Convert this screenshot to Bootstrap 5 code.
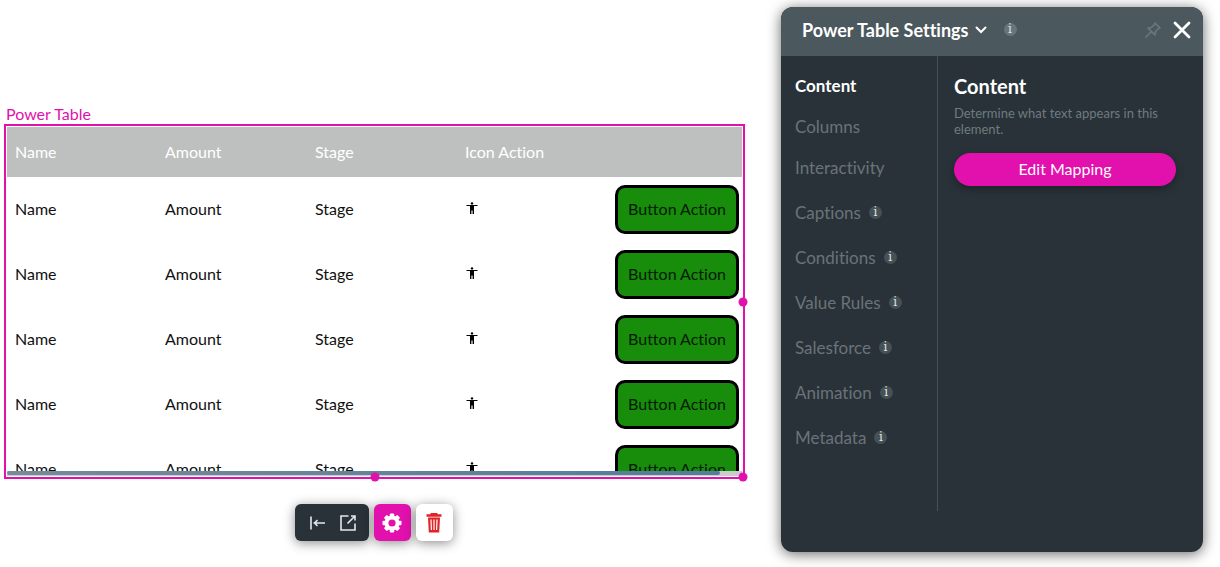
<!DOCTYPE html>
<html lang="en">
<head>
<meta charset="utf-8">
<meta name="viewport" content="width=device-width, initial-scale=1">
<title>Power Table Settings</title>
<link href="https://cdn.jsdelivr.net/npm/bootstrap@5.3.0/dist/css/bootstrap.min.css" rel="stylesheet">
<style>
  :root { --pink: #e210ad; --dark: #283238; --slate: #4b585e; }
  body { font-family: Lato, sans-serif; font-size: 16px; line-height: 20px; color: #000; background: #fff; font-variant-ligatures: none; }
  button { font-family: inherit; font-variant-ligatures: none; }
  .workspace { gap: 36px; padding: 7px 17px 15px 4px; }
  .stage { padding-top: 97px; min-width: 0; }
  .stage-label { color: var(--pink); padding-left: 2px; }
  .selection { border: 2px solid var(--pink); padding: 1px; }
  .viewport { height: 344px; overflow: hidden; }
  .power-table { table-layout: fixed; width: 100%; min-width: 735px; border-collapse: collapse; }
  .power-table th { background: #bec0bf; color: #fff; font-weight: 400; height: 50px; padding: 0 8px; }
  .power-table td { height: 65px; padding: 0 8px 2px; color: #111; }
  .power-table .fixed-col { width: 150px; }
  .power-table td:last-child { padding: 0 3px 0 8px; }
  .cell-btn { width: 100%; height: 49px; border: 3px solid #000; border-radius: 10px; background: #178d0b; color: #041a02; padding: 0 0 2px; white-space: nowrap; display: block; }
  .icon-btn { border: 0; background: none; padding: 0; display: block; line-height: 0; }
  .power-table .icon-btn { padding: 0 0 2px 1px; }
  .track { height: 5px; background: #ccc; }
  .thumb { height: 4px; width: 97%; background: linear-gradient(90deg, #758b99, #537d9b); border-radius: 3px; }
  .grip { width: 9px; height: 9px; border-radius: 50%; background: var(--pink); }
  .tools { gap: 5px; margin-top: 25px; padding-right: 2px; }
  .tool { height: 37px; min-width: 37px; border: 0; border-radius: 6px; box-shadow: 0 2px 12px rgba(0,0,0,.45); }
  .tool-dark { background: var(--dark); gap: 14px; padding: 0 13px 0 14px; }
  .tool-pink { background: var(--pink); padding: 0; }
  .tool-white { background: #fff; padding: 0; }
  .settings { width: 422px; background: var(--dark); border-radius: 12px; box-shadow: 0 2px 14px rgba(0,0,0,.6); overflow: hidden; padding-bottom: 41px; }
  .settings-head { height: 49px; background: var(--slate); padding: 0 12px 4px 21px; }
  .title-btn { border: 0; background: none; color: #fff; font-size: 18px; font-weight: 700; padding: 0; gap: 6px; }
  .info { width: 13px; height: 13px; border-radius: 50%; background: #465156; color: #e1e4e5; border: 0; padding: 0; font: 12px/13px "DejaVu Serif", serif; text-align: center; flex: none; }
  .info-head { background: #69757a; margin-left: 17px; }
  .side { width: 157px; height: 455px; border-right: 1px solid #465055; padding: 1px 0 0 14px; }
  .side a { height: 45px; color: #6b7378; font-size: 17px; line-height: 24px; text-decoration: none; display: flex; align-items: flex-end; }
  .side li { display: flex; align-items: flex-end; gap: 8px; }
  .side li .info { margin-bottom: 6px; }
  .side .plain a { height: 41px; }
  .side a.current { color: #fff; font-weight: 700; }
  .pane { padding: 17px 27px 0 16px; }
  .pane h2 { font-size: 20px; line-height: 26px; font-weight: 700; color: #fff; margin: 0 0 6px; }
  .pane p { font-size: 13px; line-height: 16px; color: #6f7b81; margin: 0 0 16px; }
  .map-btn { height: 33px; border: 0; border-radius: 17px; background: var(--pink); color: #fff; padding: 0 0 2px; box-shadow: 0 3px 8px rgba(0,0,0,.3); }
</style>
</head>
<body>
<svg class="d-none">
  <symbol id="person" viewBox="0 0 12 12"><circle cx="6" cy="1.4" r="1.2"/><path d="M.5 3h11v1H8v8H6.600V8.500H5.400V12H4V4H.5z"/></symbol>
</svg>
<div class="workspace d-flex align-items-start">
  <main class="stage flex-grow-1">
    <div class="stage-label">Power Table</div>
    <div class="selection position-relative">
      <div class="viewport">
        <table class="power-table">
          <thead><tr><th class="fixed-col">Name</th><th class="fixed-col">Amount</th><th class="fixed-col">Stage</th><th class="fixed-col">Icon Action</th><th aria-label="Button"></th></tr></thead>
          <tbody>
            <tr><td>Name</td><td>Amount</td><td>Stage</td><td><button class="icon-btn" aria-label="Icon action"><svg width="12" height="12"><use href="#person"/></svg></button></td><td><button class="cell-btn">Button Action</button></td></tr>
            <tr><td>Name</td><td>Amount</td><td>Stage</td><td><button class="icon-btn" aria-label="Icon action"><svg width="12" height="12"><use href="#person"/></svg></button></td><td><button class="cell-btn">Button Action</button></td></tr>
            <tr><td>Name</td><td>Amount</td><td>Stage</td><td><button class="icon-btn" aria-label="Icon action"><svg width="12" height="12"><use href="#person"/></svg></button></td><td><button class="cell-btn">Button Action</button></td></tr>
            <tr><td>Name</td><td>Amount</td><td>Stage</td><td><button class="icon-btn" aria-label="Icon action"><svg width="12" height="12"><use href="#person"/></svg></button></td><td><button class="cell-btn">Button Action</button></td></tr>
            <tr><td>Name</td><td>Amount</td><td>Stage</td><td><button class="icon-btn" aria-label="Icon action"><svg width="12" height="12"><use href="#person"/></svg></button></td><td><button class="cell-btn">Button Action</button></td></tr>
          </tbody>
        </table>
      </div>
      <div class="track"><div class="thumb"></div></div>
      <span class="grip position-absolute top-50 start-100 translate-middle"></span>
      <span class="grip position-absolute top-100 start-50 translate-middle"></span>
      <span class="grip position-absolute top-100 start-100 translate-middle"></span>
    </div>
    <div class="tools d-flex justify-content-center">
      <div class="tool tool-dark d-flex align-items-center">
        <button class="icon-btn" aria-label="Align left"><svg width="17" height="16" fill="none" stroke="#e6e8e9" stroke-width="1.600"><path d="M2 1.500v13M4.500 8H16M8.500 5 5.500 8l3 3"/></svg></button>
        <button class="icon-btn" aria-label="Open"><svg width="16" height="16" fill="none" stroke="#e6e8e9" stroke-width="1.600"><path d="M8.500 1H1v14h14V8.500M11 1h4v4.500M15 1 7.500 8.500"/></svg></button>
      </div>
      <button class="tool tool-pink d-flex align-items-center justify-content-center" aria-label="Settings">
        <svg width="20" height="20" viewBox="-10 -10 20 20"><g fill="#fff"><circle r="7.500"/><g id="teeth"><rect x="-2.200" y="-9.500" width="4.400" height="19" rx="1"/><rect x="-9.500" y="-2.200" width="19" height="4.400" rx="1"/></g><use href="#teeth" transform="rotate(45)"/></g><circle r="3.600" fill="#e210ad"/></svg>
      </button>
      <button class="tool tool-white d-flex align-items-center justify-content-center" aria-label="Delete">
        <svg width="16" height="20" fill="#df2428"><path d="M5 0h6l1 1.300h3.500v2.500H.5V1.300H4zM2 4.500h12l-.8 15H2.800z"/><path d="M5 6.500l.4 10.500M8 6.500V17M11 6.500L10.600 17" stroke="#fff" stroke-width="1.200"/></svg>
      </button>
    </div>
  </main>

  <aside class="settings flex-shrink-0">
    <header class="settings-head d-flex align-items-center">
      <button class="title-btn d-flex align-items-center">Power Table Settings
        <svg width="12" height="8" fill="none" stroke="#fff" stroke-width="2" stroke-linecap="round"><path d="M1.500 1.500 6 6l4.500-4.500"/></svg>
      </button>
      <button class="info info-head" aria-label="About these settings">i</button>
      <button class="icon-btn ms-auto me-2 pe-1" aria-label="Pin"><svg width="16" height="16" viewBox="1 1 16 16" fill="none" stroke="#6c777c" stroke-width="1.700" stroke-linejoin="round" stroke-linecap="round"><path d="m11 2 5 5-1.500.5-3 3L11 14 4 7l3.500-.5 3-3zM7 11l-5 5"/></svg></button>
      <button class="icon-btn" aria-label="Close"><svg width="18" height="18" stroke="#fff" stroke-width="2.800" stroke-linecap="round"><path d="m2 2 14 14M16 2 2 16"/></svg></button>
    </header>
    <div class="d-flex">
      <nav class="side flex-shrink-0">
        <ul class="list-unstyled m-0">
          <li class="plain"><a class="current" href="#">Content</a></li>
          <li class="plain"><a href="#">Columns</a></li>
          <li class="plain"><a href="#">Interactivity</a></li>
          <li><a href="#">Captions</a><button class="info" aria-label="About captions">i</button></li>
          <li><a href="#">Conditions</a><button class="info" aria-label="About conditions">i</button></li>
          <li><a href="#">Value Rules</a><button class="info" aria-label="About value rules">i</button></li>
          <li><a href="#">Salesforce</a><button class="info" aria-label="About Salesforce">i</button></li>
          <li><a href="#">Animation</a><button class="info" aria-label="About animation">i</button></li>
          <li><a href="#">Metadata</a><button class="info" aria-label="About metadata">i</button></li>
        </ul>
      </nav>
      <section class="pane flex-grow-1">
        <h2>Content</h2>
        <p>Determine what text appears in this element.</p>
        <button class="map-btn w-100">Edit Mapping</button>
      </section>
    </div>
  </aside>
</div>
<script src="https://cdn.jsdelivr.net/npm/bootstrap@5.3.0/dist/js/bootstrap.bundle.min.js"></script>
</body>
</html>
